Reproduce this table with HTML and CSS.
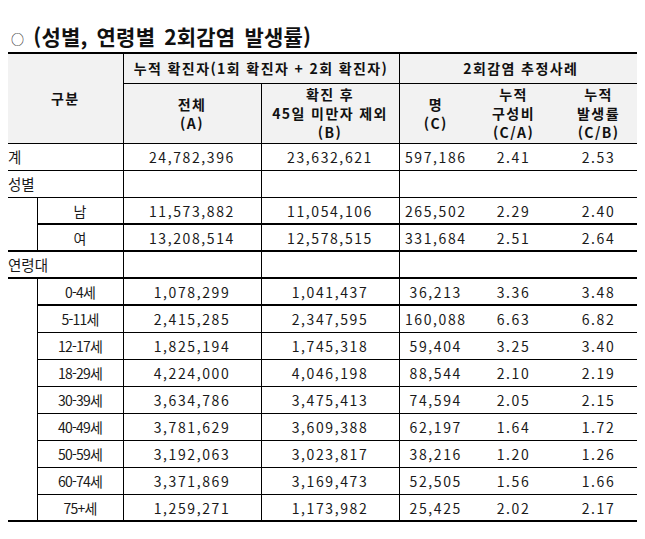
FILE: index.html
```html
<!DOCTYPE html>
<html lang="ko">
<head>
<meta charset="utf-8">
<title>성별, 연령별 2회감염 발생률</title>
<link rel="stylesheet" href="styles.css">
</head>
<body>
<h1 class="title"><span class="bullet">○</span> (성별, 연령별 2회감염 발생률)</h1>
<table class="tbl">
  <colgroup>
    <col class="c-ind"><col class="c-lab"><col class="c-a"><col class="c-b"><col class="c-c"><col class="c-ca"><col class="c-cb">
  </colgroup>
  <thead>
    <tr class="h1">
      <th colspan="2" rowspan="2" class="vr">구분</th>
      <th colspan="2" class="vr">누적 확진자(1회 확진자 + 2회 확진자)</th>
      <th colspan="3">2회감염 추정사례</th>
    </tr>
    <tr class="h2">
      <th class="vr">전체<br>(A)</th>
      <th class="vr">확진 후<br>45일 미만자 제외<br>(B)</th>
      <th>명<br>(C)</th>
      <th>누적<br>구성비<br>(C/A)</th>
      <th>누적<br>발생률<br>(C/B)</th>
    </tr>
  </thead>
  <tbody>
    <tr>
      <td colspan="2" class="lab vr">계</td>
      <td class="num vr">24,782,396</td><td class="num vr">23,632,621</td>
      <td class="num">597,186</td><td class="num">2.41</td><td class="num">2.53</td>
    </tr>
    <tr>
      <td colspan="2" class="lab vr">성별</td>
      <td class="vr"></td><td class="vr"></td><td colspan="3"></td>
    </tr>
    <tr class="thick">
      <td rowspan="2" class="ind vr"></td>
      <td class="sub vr">남</td>
      <td class="num vr">11,573,882</td><td class="num vr">11,054,106</td>
      <td class="num">265,502</td><td class="num">2.29</td><td class="num">2.40</td>
    </tr>
    <tr class="thick">
      <td class="sub vr">여</td>
      <td class="num vr">13,208,514</td><td class="num vr">12,578,515</td>
      <td class="num">331,684</td><td class="num">2.51</td><td class="num">2.64</td>
    </tr>
    <tr class="thick">
      <td colspan="2" class="lab vr">연령대</td>
      <td class="vr"></td><td class="vr"></td><td colspan="3"></td>
    </tr>
    <tr class="thick">
      <td rowspan="10" class="ind vr"></td>
      <td class="sub age vr">0-4세</td>
      <td class="num vr">1,078,299</td><td class="num vr">1,041,437</td>
      <td class="num">36,213</td><td class="num">3.36</td><td class="num">3.48</td>
    </tr>
    <tr>
      <td class="sub age vr">5-11세</td>
      <td class="num vr">2,415,285</td><td class="num vr">2,347,595</td>
      <td class="num">160,088</td><td class="num">6.63</td><td class="num">6.82</td>
    </tr>
    <tr>
      <td class="sub age vr">12-17세</td>
      <td class="num vr">1,825,194</td><td class="num vr">1,745,318</td>
      <td class="num">59,404</td><td class="num">3.25</td><td class="num">3.40</td>
    </tr>
    <tr>
      <td class="sub age vr">18-29세</td>
      <td class="num vr">4,224,000</td><td class="num vr">4,046,198</td>
      <td class="num">88,544</td><td class="num">2.10</td><td class="num">2.19</td>
    </tr>
    <tr>
      <td class="sub age vr">30-39세</td>
      <td class="num vr">3,634,786</td><td class="num vr">3,475,413</td>
      <td class="num">74,594</td><td class="num">2.05</td><td class="num">2.15</td>
    </tr>
    <tr>
      <td class="sub age vr">40-49세</td>
      <td class="num vr">3,781,629</td><td class="num vr">3,609,388</td>
      <td class="num">62,197</td><td class="num">1.64</td><td class="num">1.72</td>
    </tr>
    <tr>
      <td class="sub age vr">50-59세</td>
      <td class="num vr">3,192,063</td><td class="num vr">3,023,817</td>
      <td class="num">38,216</td><td class="num">1.20</td><td class="num">1.26</td>
    </tr>
    <tr>
      <td class="sub age vr">60-74세</td>
      <td class="num vr">3,371,869</td><td class="num vr">3,169,473</td>
      <td class="num">52,505</td><td class="num">1.56</td><td class="num">1.66</td>
    </tr>
    <tr class="final">
      <td class="sub age vr">75+세</td>
      <td class="num vr">1,259,271</td><td class="num vr">1,173,982</td>
      <td class="num">25,425</td><td class="num">2.02</td><td class="num">2.17</td>
    </tr>
  </tbody>
</table>
</body>
</html>
```

FILE: styles.css
```css
html, body {
  background: #ffffff;
}
body {
  margin: 8px;
  font-family: "Noto Sans CJK KR", "Noto Sans", sans-serif;
  color: #1a1a1a;
}
.title {
  margin: 0;
  padding: 14px 0 2px 3px;
  height: 28px;
  line-height: 28px;
  font-size: 21px;
  font-weight: bold;
  letter-spacing: 0.2px;
  word-spacing: 3px;
  color: #111;
}
.bullet {
  font-size: 13px;
  font-weight: normal;
  vertical-align: 1px;
}
.tbl {
  border-collapse: collapse;
  table-layout: fixed;
  width: 634px;
  font-size: 14px;
}
.c-ind { width: 29px; }
.c-lab { width: 86px; }
.c-a { width: 138px; }
.c-b { width: 138px; }
.c-c { width: 73px; }
.c-ca { width: 83px; }
.c-cb { width: 87px; }

.tbl th {
  background: #f2f2f2;
  font-weight: bold;
  font-size: 14px;
  line-height: 19px;
  letter-spacing: 1.4px;
  color: #111;
  padding: 0;
  text-align: center;
  vertical-align: middle;
  border-bottom: 1px solid #000;
}
.tbl thead tr.h1 th {
  border-top: 2px solid #000;
  height: 29px;
}
.tbl thead tr.h2 th {
  height: 59px;
}
.tbl td {
  height: 26px;
  padding: 0;
  border-bottom: 1px solid #000;
  text-align: center;
  vertical-align: middle;
  line-height: 20px;
}
.tbl .vr {
  border-right: 1px solid #000;
}
.tbl td.lab {
  text-align: left;
  padding-left: 0;
  font-size: 14.5px;
}
.tbl td.num {
  letter-spacing: 1.6px;
}
.tbl td.age {
  font-size: 14px;
  letter-spacing: -0.8px;
}
.tbl tr.thick td {
  height: 25px;
  border-bottom: 2px solid #000;
}
.tbl tr.final td,
.tbl td.ind {
  height: 25px;
  border-bottom: 2px solid #000;
}
```
